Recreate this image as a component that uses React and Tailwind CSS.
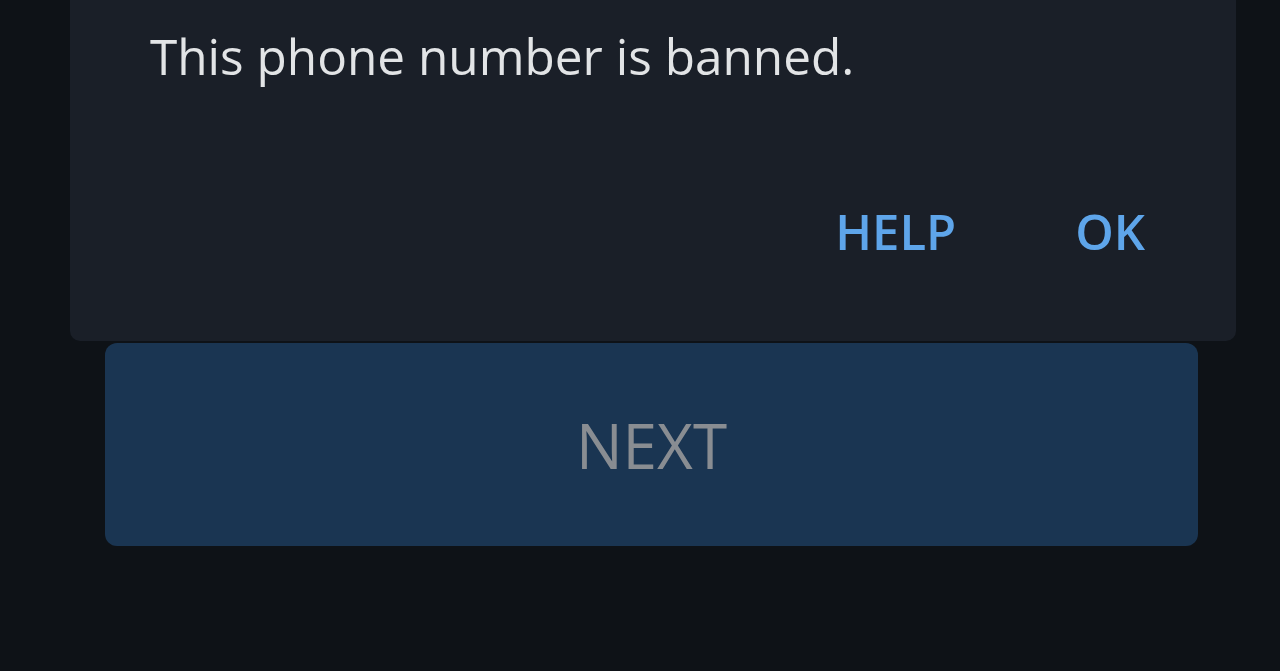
import React from 'react';

const App = () => {
  return (
    <div
      className="w-[1280px] h-[671px] overflow-hidden bg-[#0e1217] flex flex-col"
      style={{ fontFamily: '"Open Sans", "Noto Sans", sans-serif' }}
    >
      {/* Dialog */}
      <div className="ml-[70px] w-[1166px] h-[341px] bg-[#1a1f28] rounded-b-[10px] flex flex-col">
        <p className="pl-[80px] pt-[17px] text-[49.5px] leading-[78px] text-[#e2e4e6]">
          This phone number is banned.
        </p>
        <div className="mt-auto mb-[85px] flex justify-end items-center gap-[119px] pr-[91px]">
          <button className="text-[49px] font-semibold leading-none text-[#5ea5ea]">HELP</button>
          <button className="text-[49px] font-semibold leading-none text-[#5ea5ea]">OK</button>
        </div>
      </div>

      {/* Next button */}
      <div className="ml-[105px] mt-[2px] w-[1093px] h-[203px] bg-[#1a3552] rounded-[12px] flex items-center justify-center">
        <span className="text-[62px] leading-none text-[#898d92]">NEXT</span>
      </div>
    </div>
  );
};

export default App;
